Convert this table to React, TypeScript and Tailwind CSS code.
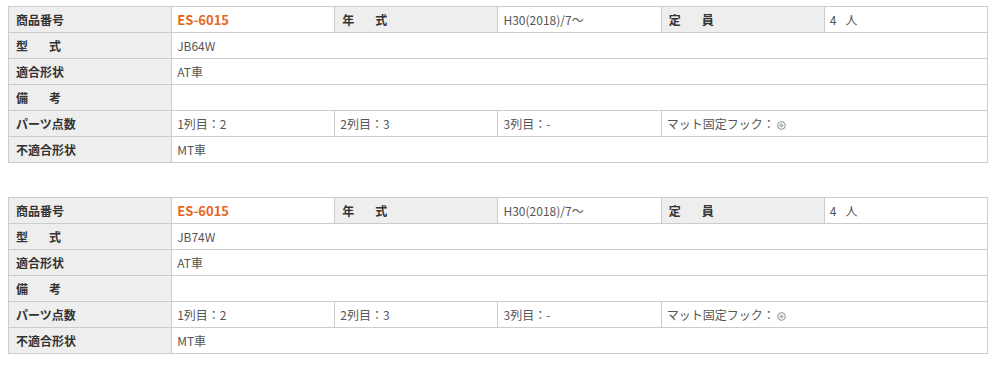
const font = "font-['Meiryo','Noto_Sans_CJK_JP',sans-serif]";

interface Spec {
  model: string;
}

const th = "bg-[#eeeeee] border border-[#cccccc] px-[7px] py-0 text-left font-bold text-[12px] text-[#333333] h-[26px]";
const td = "bg-white border border-[#cccccc] px-[5px] py-0 text-left text-[12px] text-[#555555] h-[26px]";

const Spaced = ({ a, b }: { a: string; b: string }) => (
  <span className="flex gap-[21px]">
    <span>{a}</span>
    <span>{b}</span>
  </span>
);

const HookMark = () => (
  <svg width="9" height="9" viewBox="0 0 10 10" className="inline-block ml-[2px] align-[-1px]">
    <circle cx="5" cy="5" r="4.2" fill="none" stroke="#999" strokeWidth="1.2" />
    <circle cx="5" cy="5" r="2.3" fill="#bbb" />
  </svg>
);

const SpecTable = ({ model }: Spec) => (
  <table className="w-[980px] table-fixed border-collapse">
    <tbody>
      <tr>
        <th className={th}>商品番号</th>
        <td className={`${td} !text-[#e8661c] font-bold text-[13px]`}>ES-6015</td>
        <th className={th}>
          <Spaced a="年" b="式" />
        </th>
        <td className={td}>H30(2018)/7～</td>
        <th className={th}>
          <Spaced a="定" b="員" />
        </th>
        <td className={td}>
          <span>4</span>
          <span className="ml-[9px]">人</span>
        </td>
      </tr>
      <tr>
        <th className={th}>
          <Spaced a="型" b="式" />
        </th>
        <td className={td} colSpan={5}>{model}</td>
      </tr>
      <tr>
        <th className={th}>適合形状</th>
        <td className={td} colSpan={5}>AT車</td>
      </tr>
      <tr>
        <th className={th}>
          <Spaced a="備" b="考" />
        </th>
        <td className={td} colSpan={5}></td>
      </tr>
      <tr>
        <th className={th}>パーツ点数</th>
        <td className={td}>1列目：2</td>
        <td className={td}>2列目：3</td>
        <td className={td}>3列目：-</td>
        <td className={td} colSpan={2}>
          マット固定フック：
          <HookMark />
        </td>
      </tr>
      <tr>
        <th className={th}>不適合形状</th>
        <td className={td} colSpan={5}>MT車</td>
      </tr>
    </tbody>
  </table>
);

export default function App() {
  return (
    <div className={`${font} w-[1000px] h-[383px] bg-white pl-[8px] pt-[6px] flex flex-col gap-[34px]`}>
      <SpecTable model="JB64W" />
      <SpecTable model="JB74W" />
    </div>
  );
}
